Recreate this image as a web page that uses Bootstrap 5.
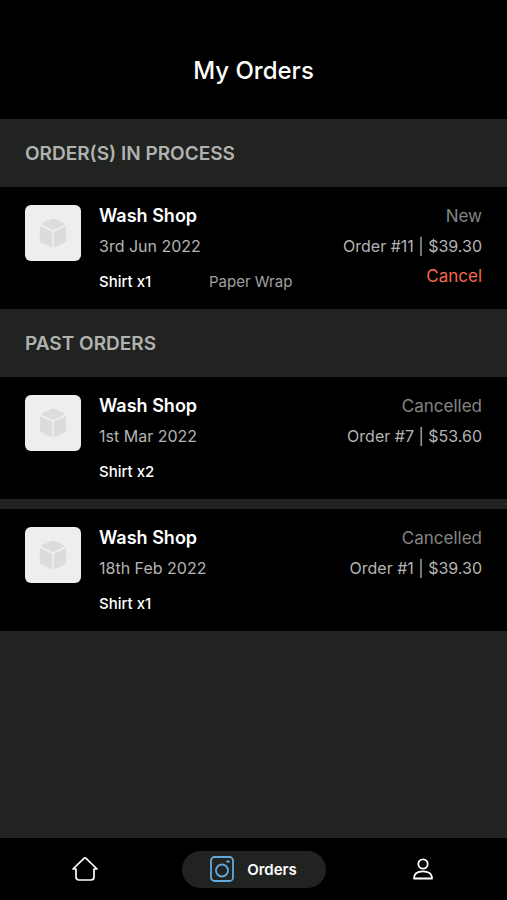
<!DOCTYPE html>
<html lang="en">
<head>
<meta charset="utf-8">
<meta name="viewport" content="width=device-width, initial-scale=1">
<title>My Orders</title>
<link href="https://cdn.jsdelivr.net/npm/bootstrap@5.3.0/dist/css/bootstrap.min.css" rel="stylesheet">
<style>
  body { background: #212321; color: #fff; font-family: Inter, "Liberation Sans", sans-serif; font-size: 16px; line-height: 22px; }
  .app-header { background: #000; padding: 55px 25px 32px; }
  .app-header h1 { font-size: 24px; line-height: 32px; font-weight: 500; }
  .section-title { font-size: 19px; line-height: 22px; font-weight: 600; color: #b0b2b0; padding: 24px 25px 22px; }
  .order { background: #000; padding: 18px 25px 16px; gap: 18px; }
  .order + .order { margin-top: 10px; }
  .thumb { width: 56px; height: 56px; border-radius: 6px; background: #eee; }
  .shop { font-size: 18px; line-height: 22px; font-weight: 600; }
  .meta { color: #b4b4b4; }
  .state { font-size: 17px; color: #858585; }
  .order-line { margin-top: 14px; font-size: 15px; }
  .item-name { width: 110px; font-weight: 500; }
  .item-note { color: #a0a0a0; }
  .cancel { font-size: 17px; line-height: 22px; color: #f4694c; }
  .tabs { background: #000; padding: 13px 0 12px; }
  .tab { height: 37px; color: #fff; font-size: 15px; font-weight: 600; }
  .tab-active { background: #212321; border-radius: 19px; width: 144px; gap: 13px; }
</style>
<script src="https://cdn.jsdelivr.net/npm/bootstrap@5.3.0/dist/js/bootstrap.bundle.min.js"></script>
</head>
<body class="min-vh-100 d-flex flex-column">
<svg width="0" height="0" class="d-none" aria-hidden="true">
  <symbol id="box" viewBox="0 0 28 30">
    <path fill="#dcdcdc" d="M12.800 .8Q14 .3 15.200 .8L25.200 5.200Q26.600 6 25.200 6.800L15.200 11.600Q14 12.200 12.800 11.600L2.800 6.800Q1.400 6 2.800 5.200ZM.8 9.600Q.8 8 2.200 8.600L12 13.200Q13.200 13.800 13.200 15V28Q13.200 29.500 12 29L2 24.600Q.8 24 .8 22.800ZM27.200 9.600Q27.200 8 25.800 8.600L16 13.200Q14.800 13.800 14.800 15V28Q14.800 29.500 16 29L26 24.600Q27.200 24 27.200 22.800Z"/>
  </symbol>
</svg>

<header class="app-header text-center"><h1 class="m-0">My Orders</h1></header>

<main class="flex-grow-1">
  <section>
    <h2 class="section-title m-0">ORDER(S) IN PROCESS</h2>
    <article class="order d-flex align-items-start">
      <div class="thumb d-flex align-items-center justify-content-center flex-shrink-0"><svg width="28" height="30" aria-hidden="true"><use href="#box"/></svg></div>
      <div class="flex-grow-1">
        <h3 class="shop m-0">Wash Shop</h3>
        <div class="meta mt-2">3rd Jun 2022</div>
        <div class="order-line d-flex"><span class="item-name">Shirt x1</span><span class="item-note">Paper Wrap</span></div>
      </div>
      <div class="d-flex flex-column align-items-end text-nowrap gap-2">
        <span class="state">New</span>
        <span class="meta">Order #11 | $39.30</span>
        <button type="button" class="cancel btn border-0 p-0">Cancel</button>
      </div>
    </article>
  </section>

  <section>
    <h2 class="section-title m-0">PAST ORDERS</h2>
    <article class="order d-flex align-items-start">
      <div class="thumb d-flex align-items-center justify-content-center flex-shrink-0"><svg width="28" height="30" aria-hidden="true"><use href="#box"/></svg></div>
      <div class="flex-grow-1">
        <h3 class="shop m-0">Wash Shop</h3>
        <div class="meta mt-2">1st Mar 2022</div>
        <div class="order-line d-flex"><span class="item-name">Shirt x2</span></div>
      </div>
      <div class="d-flex flex-column align-items-end text-nowrap gap-2">
        <span class="state">Cancelled</span>
        <span class="meta">Order #7 | $53.60</span>
      </div>
    </article>
    <article class="order d-flex align-items-start">
      <div class="thumb d-flex align-items-center justify-content-center flex-shrink-0"><svg width="28" height="30" aria-hidden="true"><use href="#box"/></svg></div>
      <div class="flex-grow-1">
        <h3 class="shop m-0">Wash Shop</h3>
        <div class="meta mt-2">18th Feb 2022</div>
        <div class="order-line d-flex"><span class="item-name">Shirt x1</span></div>
      </div>
      <div class="d-flex flex-column align-items-end text-nowrap gap-2">
        <span class="state">Cancelled</span>
        <span class="meta">Order #1 | $39.30</span>
      </div>
    </article>
  </section>
</main>

<nav class="tabs row g-0 sticky-bottom" aria-label="Main">
  <div class="col d-flex justify-content-center">
    <a href="#" class="tab d-flex align-items-center justify-content-center" aria-label="Home">
      <svg width="28" height="28" viewBox="0 0 28 28" fill="none" stroke="#fff" stroke-width="1.700" stroke-linejoin="round" stroke-linecap="round" aria-hidden="true"><path d="M5 13H2L13.200 2.200Q14 1.500 14.800 2.200L26 13H23V21Q23 24 20 24H8Q5 24 5 21Z"/></svg>
    </a>
  </div>
  <div class="col d-flex justify-content-center">
    <a href="#" class="tab tab-active d-flex align-items-center justify-content-center text-decoration-none" aria-current="page">
      <svg width="24" height="28" viewBox="0 0 24 28" fill="none" stroke="#62a9dc" stroke-width="1.800" stroke-linecap="round" aria-hidden="true"><rect x="1" y="1" width="22" height="24" rx="3.500"/><circle cx="12" cy="14.500" r="6"/><path d="M17 5.500H19"/></svg>
      Orders
    </a>
  </div>
  <div class="col d-flex justify-content-center">
    <a href="#" class="tab d-flex align-items-center justify-content-center" aria-label="Profile">
      <svg width="20" height="24" viewBox="0 0 20 24" fill="none" stroke="#fff" stroke-width="1.800" stroke-linejoin="round" aria-hidden="true"><circle cx="10" cy="6" r="4.700"/><path d="M1 20.500C1 15.500 5 13.300 10 13.300S19 15.500 19 20.500Z"/></svg>
    </a>
  </div>
</nav>
</body>
</html>
